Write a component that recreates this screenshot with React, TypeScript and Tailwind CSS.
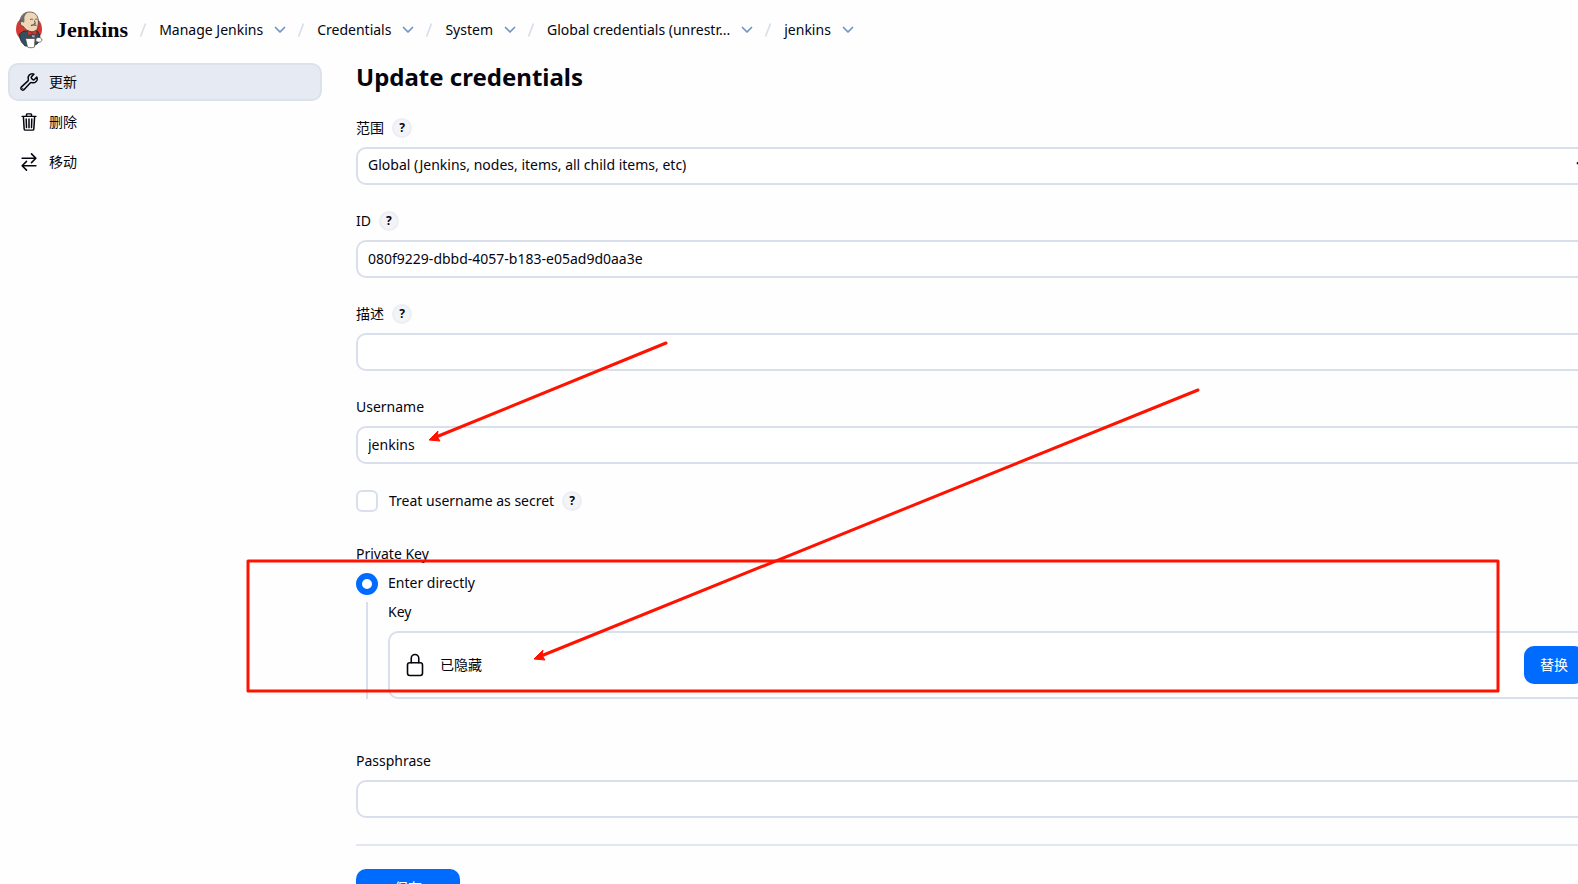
import type { ReactNode } from "react";

const crumbs = [
  "Manage Jenkins",
  "Credentials",
  "System",
  "Global credentials (unrestr...",
  "jenkins",
];

function Logo() {
  return (
    <svg viewBox="0 0 28 38" className="h-[38px] w-7 shrink-0" aria-hidden="true">
      <ellipse cx="14" cy="18" rx="13" ry="13.500" fill="#d33833" />
      <path
        d="M4.500 23 9 20l8 .5 5-1 2.500 4 .8 6-3.300 3.500L18 35h-8l-3.500-4L5 27.500Z"
        fill="#335061"
        stroke="#1d2b35"
        strokeWidth="0.8"
      />
      <path
        d="M5.500 10C5 4.500 9.500 1 14.500 1c5.500 0 8.500 3.500 8.800 8.500.2 3-.3 6.500-1.300 9-.8 1.800-3 2.500-5.500 2.200-3.500-.4-6.500-2.200-8-5.200-2.500-.3-3.600-3-3-5.500Z"
        fill="#f0d6b7"
        stroke="#4a423b"
        strokeWidth="0.8"
      />
      <path
        d="M5.800 8.500C6.300 4.500 9.500 1.500 13 1.200c-1.800 1.300-3.300 3-3.700 5.300 0 2 .6 3.500-.4 5.300-.8-.8-1.900-1-3-.3Z"
        fill="#6d6b6d"
      />
      <path d="M15 8.800c1-.9 2.300-.9 3.200-.1M20 8.500c.8-.6 1.700-.5 2.300 0M19.500 9.500l.8 3-1.500.3" fill="none" stroke="#4a423b" strokeWidth="0.9" />
      <path d="M16 14.800c1.300-1.300 4-1.300 5.500-.2" fill="none" stroke="#5c5551" strokeWidth="1.300" />
      <path
        d="m12.500 19.500 4.500 2 4.300-2.500.5 5-4.300-1.200-4.500 1.700Z"
        fill="#d33833"
        stroke="#81201c"
        strokeWidth="0.6"
      />
      <path d="M17 24l3 .5-.5 2-2.500-.5Z" fill="#8fa9b8" />
      <path d="M21 27.500c1.500-1.500 4.500-1.500 5.800.5.600 2-1 3.300-3 3.200l-3-.7Z" fill="#fff" stroke="#4a423b" strokeWidth="0.7" />
      <path d="M10.500 27.500H20L19.500 36c-2 1-5 1-7 0Z" fill="#fff" stroke="#4a423b" strokeWidth="0.7" />
    </svg>
  );
}

function Chevron() {
  return (
    <svg viewBox="0 0 12 8" className="h-2 w-3" fill="none" stroke="#6f93c4" strokeWidth="1.7">
      <path d="M1.500 1.500 6 6l4.500-4.500" strokeLinecap="round" strokeLinejoin="round" />
    </svg>
  );
}

function WrenchIcon() {
  return (
    <svg viewBox="0 0 512 512" className="size-5" fill="none" stroke="currentColor" strokeWidth="38">
      <path
        d="M393.870 190a32.100 32.100 0 01-45.250 0l-26.570-26.570a32.090 32.090 0 010-45.260L382.190 58a1 1 0 00-.3-1.640c-38.820-16.640-89.150-8.160-121.110 23.570-30.580 30.350-32.320 76-21.120 115.840a31.930 31.930 0 01-9.060 32.080L64 380a48.170 48.170 0 1068 68l153.860-167a31.930 31.930 0 0131.600-9.130c39.540 10.590 84.540 8.600 114.720-21.190 32.490-32 39.500-88.560 23.750-120.930a1 1 0 00-1.600-.26z"
        strokeLinecap="round"
        strokeMiterlimit="10"
      />
      <circle cx="96" cy="416" r="16" fill="currentColor" stroke="none" />
    </svg>
  );
}

function TrashIcon() {
  return (
    <svg viewBox="0 0 512 512" className="size-5" fill="none" stroke="currentColor" strokeWidth="38" strokeLinecap="round" strokeLinejoin="round">
      <path d="M112 112l20 320c.950 18.490 14.400 32 32 32h184c17.670 0 30.870-13.510 32-32l20-320M80 112h352M192 112V72a23.930 23.930 0 0124-24h80a23.930 23.930 0 0124 24v40M256 176v224M184 176l8 224M328 176l-8 224" />
    </svg>
  );
}

function SwapIcon() {
  return (
    <svg viewBox="0 0 512 512" className="size-5" fill="none" stroke="currentColor" strokeWidth="40" strokeLinecap="round" strokeLinejoin="round">
      <path d="M320 48l112 112-112 112M420 160H80M192 464L80 352l112-112M92 352h340" />
    </svg>
  );
}

function LockIcon() {
  return (
    <svg viewBox="0 0 512 512" className="size-6" fill="none" stroke="currentColor" strokeWidth="34" strokeLinecap="round" strokeLinejoin="round">
      <path d="M336 208v-95a80 80 0 00-160 0v95" />
      <rect x="96" y="208" width="320" height="272" rx="48" ry="48" />
    </svg>
  );
}

function Help({ about }: { about: string }) {
  return (
    <button
      type="button"
      aria-label={`Help for ${about}`}
      className="flex size-5 items-center justify-center rounded-full border-2 border-[#eceef3] bg-[#f3f4f8] text-xs font-bold"
    >
      ?
    </button>
  );
}

function Field({ id, label, help, children }: { id: string; label: string; help?: boolean; children: ReactNode }) {
  return (
    <div className="mb-[26px]">
      <div className="mb-[9px] flex h-5 items-center gap-2">
        <label htmlFor={id}>{label}</label>
        {help && <Help about={label} />}
      </div>
      {children}
    </div>
  );
}

const inputClass = "block h-[38px] w-full rounded-[10px] border-2 border-[#d9dfeb] bg-white px-[10px] pb-[2px] outline-none";

function TaskLink({ icon, label, active }: { icon: ReactNode; label: string; active?: boolean }) {
  return (
    <a
      href="#"
      className={
        active
          ? "flex h-[38px] items-center gap-[10px] rounded-[10px] border-2 border-[#dce2ea] bg-[#e6eaf2] px-[9px]"
          : "flex h-[38px] items-center gap-[10px] rounded-[10px] border-2 border-transparent px-[9px]"
      }
    >
      {icon}
      {label}
    </a>
  );
}

function Marks() {
  return (
    <svg className="pointer-events-none absolute top-0 left-0" width="1578" height="884" fill="none" stroke="#ff1200" strokeWidth="3" aria-hidden="true">
      <rect x="248" y="561" width="1250" height="130" strokeLinejoin="round" />
      <path d="M666 343 436 437M1198 390 541 656" strokeLinecap="round" />
      <path d="m429 440 9-9-1 5.500 3 4.500ZM534 659l9-9-1 5.500 3 4.500Z" fill="#ff1200" strokeWidth="1" />
    </svg>
  );
}

export default function App() {
  return (
    <div className="relative h-screen overflow-hidden bg-[#fefefe] font-['Noto_Sans','Noto_Sans_CJK_SC',sans-serif] text-sm leading-5 text-[#05050f]">
      <header className="flex h-[60px] items-center pl-[15px]">
        <a href="#" className="flex items-center gap-[13px]">
          <Logo />
          <span className="font-['Liberation_Serif',serif] text-[22px] font-bold">Jenkins</span>
        </a>
        <nav aria-label="Breadcrumb">
          <ol className="flex">
            {crumbs.map((crumb) => (
              <li key={crumb} className="flex items-center">
                <svg viewBox="0 0 8 14" className="mr-3 ml-[11px] h-[14px] w-2" stroke="#d5deeb" strokeWidth="1.6">
                  <path d="M1.500 13.500 6.500.5" />
                </svg>
                <a href="#">{crumb}</a>
                <button type="button" aria-label={`${crumb} menu`} className="ml-[11px]">
                  <Chevron />
                </button>
              </li>
            ))}
          </ol>
        </nav>
      </header>

      <div className="flex items-start pt-[3px]">
        <aside className="ml-2 flex w-[314px] shrink-0 flex-col gap-[2px]">
          <TaskLink icon={<WrenchIcon />} label="更新" active />
          <TaskLink icon={<TrashIcon />} label="删除" />
          <TaskLink icon={<SwapIcon />} label="移动" />
        </aside>

        <main className="-mr-6 ml-[34px] min-w-0 flex-1">
          <h1 className="mb-[27px] text-2xl leading-7 font-bold">Update credentials</h1>
          <form>
            <Field id="scope" label="范围" help>
              <div className="relative">
                <select id="scope" className={`${inputClass} appearance-none`}>
                  <option>Global (Jenkins, nodes, items, all child items, etc)</option>
                </select>
                <svg viewBox="0 0 12 8" className="pointer-events-none absolute top-[14px] right-[14px] h-2 w-3" fill="none" stroke="#0c0c18" strokeWidth="2">
                  <path d="M1 1.500 6 6l5-4.500" />
                </svg>
              </div>
            </Field>
            <Field id="cred-id" label="ID" help>
              <input id="cred-id" type="text" className={inputClass} defaultValue="080f9229-dbbd-4057-b183-e05ad9d0aa3e" />
            </Field>
            <Field id="description" label="描述" help>
              <input id="description" type="text" className={inputClass} />
            </Field>
            <Field id="username" label="Username">
              <input id="username" type="text" className={inputClass} defaultValue="jenkins" />
            </Field>

            <div className="mb-8 flex h-[22px] items-center">
              <input
                id="secret"
                type="checkbox"
                className="mr-[11px] size-[22px] appearance-none rounded-md border-2 border-[#d9dfeb] bg-white"
              />
              <label htmlFor="secret" className="mr-2">Treat username as secret</label>
              <Help about="Treat username as secret" />
            </div>

            <fieldset className="mb-[52px]">
              <legend className="mb-[9px]">Private Key</legend>
              <div className="flex h-[22px] gap-[10px]">
                <input
                  id="direct"
                  type="radio"
                  name="source"
                  defaultChecked
                  className="size-[22px] appearance-none rounded-full border-[6px] border-[#006cff] bg-white"
                />
                <label htmlFor="direct">Enter directly</label>
              </div>
              <div className="mt-[7px] ml-[10px] border-l-2 border-[#d9dfeb] pl-5">
                <div className="mb-[9px]">Key</div>
                <div className="flex h-[68px] items-center rounded-[10px] border-2 border-[#d9dfeb] bg-white pr-4 pl-[13px]">
                  <LockIcon />
                  <span className="ml-[13px]">已隐藏</span>
                  <button type="button" className="ml-auto h-[38px] rounded-[10px] bg-[#006cff] px-4 text-white">
                    替换
                  </button>
                </div>
              </div>
            </fieldset>

            <Field id="passphrase" label="Passphrase">
              <input id="passphrase" type="password" className={inputClass} />
            </Field>
            <hr className="mb-[23px] border-t-2 border-[#e3e7f1]" />
            <button type="submit" className="h-[38px] w-[104px] rounded-[10px] bg-[#006cff] text-white">
              保存
            </button>
          </form>
        </main>
      </div>
      <Marks />
    </div>
  );
}
